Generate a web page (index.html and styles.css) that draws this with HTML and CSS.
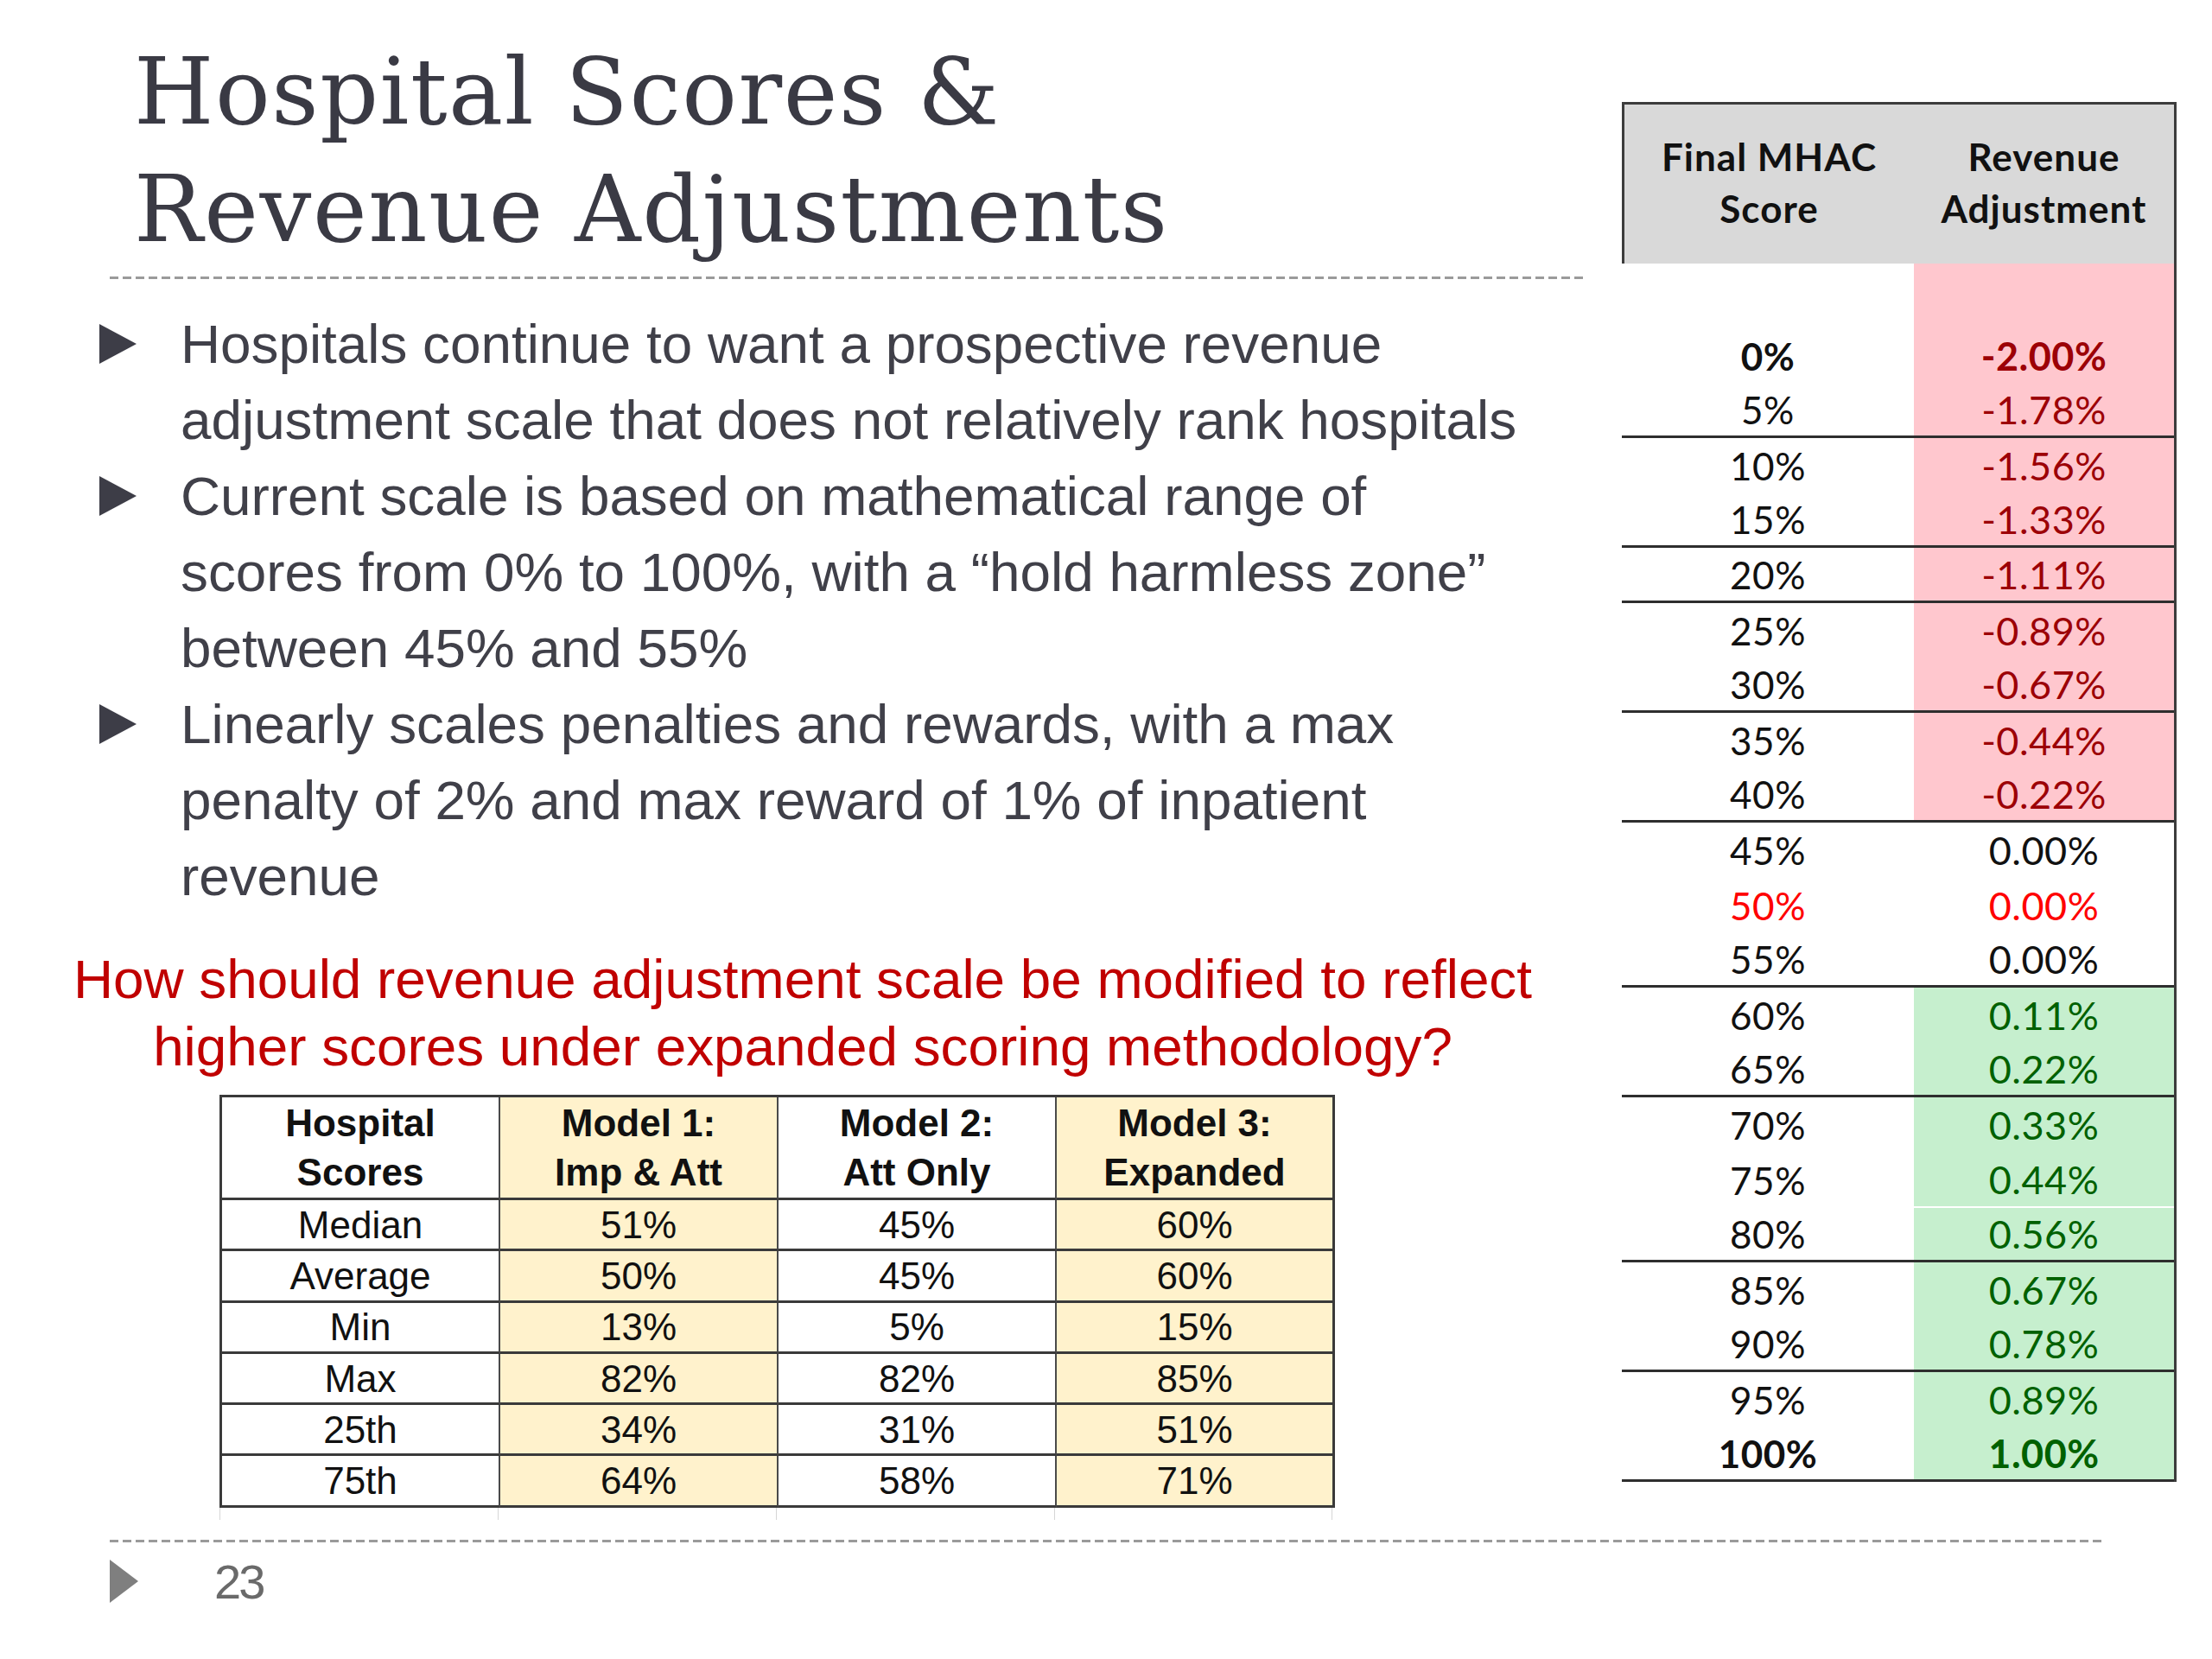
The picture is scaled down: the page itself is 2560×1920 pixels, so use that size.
FILE: index.html
```html
<!DOCTYPE html>
<html lang="en">
<head>
<meta charset="utf-8">
<title>Hospital Scores &amp; Revenue Adjustments</title>
<link rel="stylesheet" href="styles.css">
</head>
<body>
<div class="slide">
  <div class="main">
    <div class="left">
      <h1 class="title">Hospital Scores &amp;<br>Revenue Adjustments</h1>
      <div class="rule title-rule"></div>
      <ul class="bullets">
        <li><span class="tri"></span><span class="txt">Hospitals continue to want a prospective revenue<br>adjustment scale that does not relatively rank hospitals</span></li>
        <li><span class="tri"></span><span class="txt">Current scale is based on mathematical range of<br>scores from 0% to 100%, with a “hold harmless zone”<br>between 45% and 55%</span></li>
        <li><span class="tri"></span><span class="txt">Linearly scales penalties and rewards, with a max<br>penalty of 2% and max reward of 1% of inpatient<br>revenue</span></li>
      </ul>
      <p class="question">How should revenue adjustment scale be modified to reflect<br>higher scores under expanded scoring methodology?</p>
      <div class="scores">
        <div class="c h">Hospital<br>Scores</div>
        <div class="c h y">Model 1:<br>Imp &amp; Att</div>
        <div class="c h">Model 2:<br>Att Only</div>
        <div class="c h y">Model 3:<br>Expanded</div>

        <div class="c">Median</div><div class="c y">51%</div><div class="c">45%</div><div class="c y">60%</div>
        <div class="c">Average</div><div class="c y">50%</div><div class="c">45%</div><div class="c y">60%</div>
        <div class="c">Min</div><div class="c y">13%</div><div class="c">5%</div><div class="c y">15%</div>
        <div class="c">Max</div><div class="c y">82%</div><div class="c">82%</div><div class="c y">85%</div>
        <div class="c">25th</div><div class="c y">34%</div><div class="c">31%</div><div class="c y">51%</div>
        <div class="c">75th</div><div class="c y">64%</div><div class="c">58%</div><div class="c y">71%</div>
      </div>
      <div class="ticks"><span></span><span></span><span></span><span></span></div>
    </div>

    <div class="right">
      <div class="scale">
        <div class="scale-head">
          <div class="hcell">Final MHAC<br>Score</div>
          <div class="hcell">Revenue<br>Adjustment</div>
        </div>
        <div class="scale-body">
          <div class="srow gap"><div class="s"></div><div class="v neg"></div></div>
          <div class="srow"><div class="s b">0%</div><div class="v neg b">-2.00%</div></div>
          <div class="srow sep"><div class="s">5%</div><div class="v neg">-1.78%</div></div>
          <div class="srow"><div class="s">10%</div><div class="v neg">-1.56%</div></div>
          <div class="srow sep"><div class="s">15%</div><div class="v neg">-1.33%</div></div>
          <div class="srow sep"><div class="s">20%</div><div class="v neg">-1.11%</div></div>
          <div class="srow"><div class="s">25%</div><div class="v neg">-0.89%</div></div>
          <div class="srow sep"><div class="s">30%</div><div class="v neg">-0.67%</div></div>
          <div class="srow"><div class="s">35%</div><div class="v neg">-0.44%</div></div>
          <div class="srow sep"><div class="s">40%</div><div class="v neg">-0.22%</div></div>
          <div class="srow"><div class="s">45%</div><div class="v">0.00%</div></div>
          <div class="srow red"><div class="s">50%</div><div class="v">0.00%</div></div>
          <div class="srow sep"><div class="s">55%</div><div class="v">0.00%</div></div>
          <div class="srow"><div class="s">60%</div><div class="v pos">0.11%</div></div>
          <div class="srow sep"><div class="s">65%</div><div class="v pos">0.22%</div></div>
          <div class="srow"><div class="s">70%</div><div class="v pos">0.33%</div></div>
          <div class="srow"><div class="s">75%</div><div class="v pos wsep">0.44%</div></div>
          <div class="srow sep"><div class="s">80%</div><div class="v pos">0.56%</div></div>
          <div class="srow"><div class="s">85%</div><div class="v pos">0.67%</div></div>
          <div class="srow sep"><div class="s">90%</div><div class="v pos">0.78%</div></div>
          <div class="srow"><div class="s">95%</div><div class="v pos">0.89%</div></div>
          <div class="srow sep"><div class="s b">100%</div><div class="v pos b">1.00%</div></div>
        </div>
      </div>
    </div>
  </div>

  <div class="rule footer-rule"></div>
  <div class="footer">
    <span class="ftri"></span>
    <span class="page">23</span>
  </div>
</div>
</body>
</html>
```

FILE: styles.css
```css
* { box-sizing: border-box; }

html, body {
  margin: 0;
  padding: 0;
  background: #ffffff;
}

.slide {
  width: 2560px;
  height: 1920px;
  overflow: hidden;
  background: #ffffff;
  font-family: "Liberation Sans", Arial, sans-serif;
}

.main {
  display: flex;
  align-items: flex-start;
}

.left {
  width: 1877px;
  flex: none;
}

/* Title */
.title {
  margin: 39px 0 0 155px;
  font-family: "DejaVu Serif", "Liberation Serif", serif;
  font-weight: normal;
  font-size: 106px;
  line-height: 136px;
  letter-spacing: 1.5px;
  color: #3a3a44;
  white-space: nowrap;
}

.rule {
  height: 3px;
  background: repeating-linear-gradient(90deg, #9a9a9a 0 10px, transparent 10px 15px);
}

.title-rule {
  margin: 9px 0 0 127px;
  width: 1710px;
}

/* Bullets */
.bullets {
  list-style: none;
  margin: 31px 0 0 0;
  padding: 0;
}

.bullets li {
  display: flex;
  align-items: flex-start;
}

.tri {
  flex: none;
  width: 93px;
  height: 88px;
  margin-left: 115px;
  display: flex;
  align-items: center;
}

.tri::before {
  content: "";
  display: block;
  width: 0;
  height: 0;
  border-top: 23px solid transparent;
  border-bottom: 23px solid transparent;
  border-left: 43px solid #3d3d47;
}

.txt {
  font-size: 63.8px;
  line-height: 88px;
  color: #404049;
  white-space: nowrap;
  padding-left: 1px;
}

/* Question */
.question {
  margin: 36px 0 0 29px;
  width: 1800px;
  text-align: center;
  font-size: 63.8px;
  line-height: 78px;
  color: #c00000;
  white-space: nowrap;
}

/* Scores table */
.scores {
  margin: 17px 0 0 254px;
  width: 1291px;
  display: grid;
  grid-template-columns: repeat(4, 322px);
  grid-template-rows: 119px repeat(6, 59.3px);
  border-top: 3px solid #3a3a3a;
  border-left: 3px solid #3a3a3a;
}

.scores .c {
  display: flex;
  align-items: center;
  justify-content: center;
  text-align: center;
  font-size: 44px;
  line-height: 57px;
  color: #111111;
  background: #ffffff;
  border-right: 2px solid #4a4a4a;
  border-bottom: 3px solid #3a3a3a;
}

.scores .c:nth-child(4n) {
  border-right: 3px solid #3a3a3a;
}

.scores .h {
  font-weight: bold;
}

.scores .y {
  background: #fff2cc;
}

.ticks {
  margin-left: 254px;
  width: 1291px;
  height: 14px;
  display: grid;
  grid-template-columns: repeat(4, 322px);
}

.ticks span {
  border-left: 1px solid #d6d6d6;
}

.ticks span:last-child {
  border-right: 1px solid #d6d6d6;
}

/* Right scale table */
.right {
  flex: none;
  width: 642px;
  margin-top: 118px;
}

.scale {
  font-family: "Lato", "Open Sans", sans-serif;
  font-size: 44px;
  color: #111111;
}

.scale-head {
  height: 187px;
  display: flex;
  background: #d9d9d9;
  border-top: 3px solid #3c3c3c;
  border-left: 3px solid #3c3c3c;
  border-right: 3px solid #3c3c3c;
  padding-top: 30px;
}

.hcell {
  font-weight: bold;
  text-align: center;
  line-height: 60px;
  letter-spacing: 1px;
}

.hcell:first-child {
  width: 335px;
}

.hcell:last-child {
  width: 301px;
}

.scale-body {
  border-right: 3px solid #3c3c3c;
}

.srow {
  display: flex;
  height: 63.6px;
}

.srow.gap {
  height: 75px;
}

.srow.sep {
  border-bottom: 3px solid #2e2e2e;
}

.s, .v {
  display: flex;
  align-items: center;
  justify-content: center;
  letter-spacing: 0.5px;
}

.s {
  width: 338px;
}

.v {
  width: 301px;
  font-size: 45px;
}

.b {
  font-weight: bold;
}

.neg {
  background: #ffc7ce;
  color: #9c0006;
}

.pos {
  background: #c6efce;
  color: #006100;
}

.wsep {
  border-bottom: 2px solid #ffffff;
}

.srow.red .s,
.srow.red .v {
  color: #ff0000;
}

/* Footer */
.footer-rule {
  margin: 23px 0 0 127px;
  width: 2306px;
}

.footer {
  display: flex;
  align-items: center;
  height: 51px;
  margin-top: 20px;
  padding-left: 127px;
}

.ftri {
  width: 0;
  height: 0;
  border-top: 25px solid transparent;
  border-bottom: 25px solid transparent;
  border-left: 33px solid #7f7f7f;
}

.page {
  margin-left: 88px;
  font-size: 56px;
  line-height: 51px;
  letter-spacing: -3px;
  color: #6a6a6a;
}
```
